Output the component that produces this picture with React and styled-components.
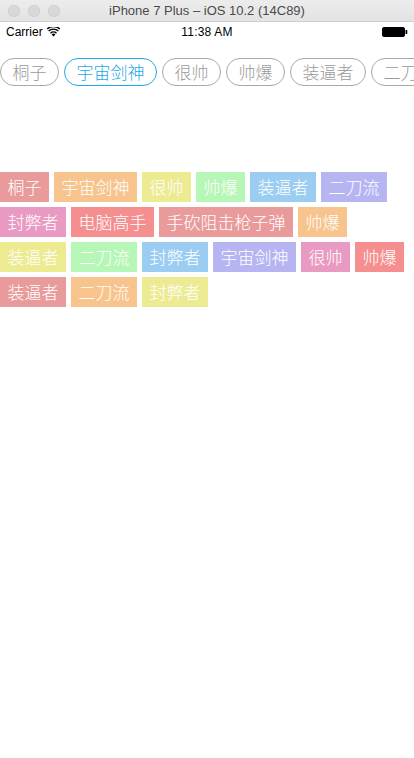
import React from "react";
import styled, { createGlobalStyle } from "styled-components";

const Global = createGlobalStyle`
  html, body { margin: 0; padding: 0; background: #fff; }
  body { width: 414px; height: 758px; overflow: hidden; font-family: "Noto Sans CJK SC", "Noto Sans", sans-serif; }
`;

const TitleBar = styled.div`
  height: 21px;
  background: linear-gradient(#ececec, #e3e3e3);
  border-bottom: 1px solid #cfcfcf;
  display: flex;
  align-items: center;
  position: relative;
  padding-left: 8px;
  gap: 8px;
`;

const Light = styled.span`
  width: 12px;
  height: 12px;
  border-radius: 50%;
  background: #d8d8d8;
  box-shadow: inset 0 0 0 0.5px #c8c8c8;
`;

const Title = styled.div`
  position: absolute;
  left: 0;
  right: 0;
  top: 0;
  line-height: 21px;
  text-align: center;
  font-family: "Liberation Sans", Arial, sans-serif;
  font-size: 13px;
  color: #4a4a4a;
  pointer-events: none;
`;

const StatusBar = styled.div`
  height: 20px;
  display: grid;
  grid-template-columns: 1fr auto 1fr;
  align-items: center;
  padding: 0 6px;
  font-family: "Liberation Sans", Arial, sans-serif;
  font-size: 12px;
  color: #000;
`;

const Left = styled.div`
  display: flex;
  align-items: center;
  gap: 4px;
`;

const Time = styled.div`
  font-weight: 400;
  letter-spacing: 0.2px;
`;

const Right = styled.div`
  display: flex;
  justify-content: flex-end;
  align-items: center;
  padding-right: 0;
`;

const PillRow = styled.div`
  display: flex;
  gap: 5px;
  padding-top: 16px;
  overflow: hidden;
  white-space: nowrap;
`;

const Pill = styled.div`
  flex: none;
  height: 28px;
  box-sizing: border-box;
  padding: 0 11.5px;
  border-radius: 14px;
  border: 1px solid ${(p) => (p.$active ? "#1fa9e3" : "#a8a8a8")};
  color: ${(p) => (p.$active ? "#1ba8e5" : "#9a9a9a")};
  font-size: 17px;
  font-weight: 300;
  line-height: 26px;
`;

const TagWrap = styled.div`
  display: flex;
  flex-wrap: wrap;
  gap: 5px;
  margin-top: 86px;
`;

const Tag = styled.div`
  height: 30px;
  padding: 0 7.5px;
  background: ${(p) => p.$bg};
  color: #fff;
  font-size: 17px;
  font-weight: 300;
  line-height: 30px;
  white-space: nowrap;
`;

const pills = ["桐子", "宇宙剑神", "很帅", "帅爆", "装逼者", "二刀流"];

const colors = ["#e99a9a", "#f7c48d", "#eceb92", "#b6f6b6", "#9bcdf2", "#b6b5f2", "#e99ac3", "#f58e8e"];

const tags = [
  "桐子", "宇宙剑神", "很帅", "帅爆", "装逼者", "二刀流",
  "封弊者", "电脑高手", "手砍阻击枪子弹", "帅爆",
  "装逼者", "二刀流", "封弊者", "宇宙剑神", "很帅", "帅爆",
  "装逼者", "二刀流", "封弊者",
];

const Wifi = () => (
  <svg width="13" height="10" viewBox="0 0 13 10">
    <path d="M6.5 9.5 L4.6 7.4 A2.8 2.8 0 0 1 8.4 7.4 Z" fill="#000" />
    <path d="M3.5 6.2 A4.4 4.4 0 0 1 9.5 6.2" stroke="#000" strokeWidth="1.4" fill="none" />
    <path d="M1.6 4.1 A7 7 0 0 1 11.4 4.1" stroke="#000" strokeWidth="1.4" fill="none" />
    <path d="M0.2 2 A9.4 9.4 0 0 1 12.8 2" stroke="#000" strokeWidth="1.3" fill="none" />
  </svg>
);

const Battery = () => (
  <svg width="26" height="10" viewBox="0 0 26 10">
    <rect x="0.5" y="0.5" width="22" height="9" rx="1.5" fill="#000" stroke="#000" />
    <rect x="23.5" y="3" width="1.8" height="4" rx="0.6" fill="#000" />
  </svg>
);

export default function App() {
  return (
    <>
      <Global />
      <TitleBar>
        <Light />
        <Light />
        <Light />
        <Title>iPhone 7 Plus – iOS 10.2 (14C89)</Title>
      </TitleBar>
      <StatusBar>
        <Left>
          <span>Carrier</span>
          <Wifi />
        </Left>
        <Time>11:38 AM</Time>
        <Right>
          <Battery />
        </Right>
      </StatusBar>
      <PillRow>
        {pills.map((p, i) => (
          <Pill key={i} $active={i === 1}>{p}</Pill>
        ))}
      </PillRow>
      <TagWrap>
        {tags.map((t, i) => (
          <Tag key={i} $bg={colors[i % colors.length]}>{t}</Tag>
        ))}
      </TagWrap>
    </>
  );
}
